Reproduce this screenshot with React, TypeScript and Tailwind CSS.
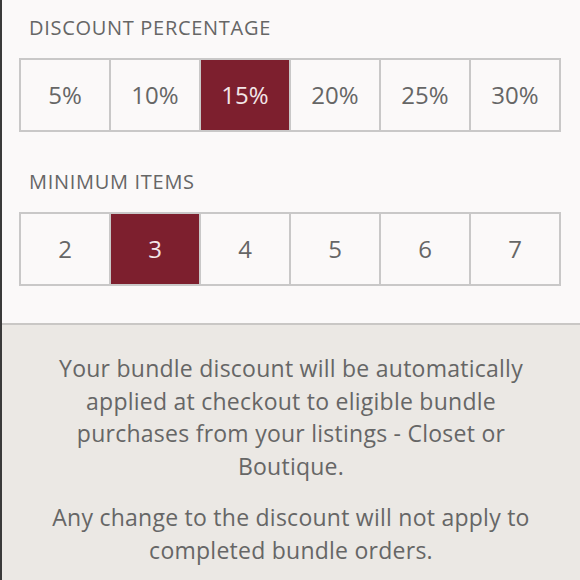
import React from "react";

const pct = ["5%", "10%", "15%", "20%", "25%", "30%"];
const items = ["2", "3", "4", "5", "6", "7"];

function Row({ values, selected }: { values: string[]; selected: number }) {
  return (
    <div className="flex w-[542px] h-[74px] border-2 border-[#c9c8c8]">
      {values.map((v, i) => (
        <div
          key={v}
          className={`flex-1 flex items-center justify-center text-[24px] ${i > 0 ? "border-l-2 border-[#c9c8c8]" : ""} ${i === selected ? "bg-[#7d1f2e] text-[#f3e6e8]" : "text-[#666666]"}`}
        >
          {v}
        </div>
      ))}
    </div>
  );
}

export default function App() {
  return (
    <div
      className="w-[580px] h-[580px] overflow-hidden border-l-2 border-[#3a3a3a] flex flex-col"
      style={{ fontFamily: "'Open Sans', Lato, sans-serif" }}
    >
      <div className="h-[323px] bg-[#fbf9f9] pl-[17px] pt-[16px]">
        <div className="h-[24px] leading-[24px] text-[20px] tracking-[0.7px] text-[#666666] pl-[10px]">DISCOUNT PERCENTAGE</div>
        <div className="mt-[18px]">
          <Row values={pct} selected={2} />
        </div>
        <div className="mt-[38px] h-[24px] leading-[24px] text-[20px] tracking-[0.7px] text-[#666666] pl-[10px]">MINIMUM ITEMS</div>
        <div className="mt-[18px]">
          <Row values={items} selected={1} />
        </div>
      </div>
      <div className="flex-1 border-t-2 border-[#c9c7c5] bg-[#ebe8e4] pt-[27px] text-center text-[23px] tracking-[0.25px] leading-[32.5px] text-[#666666]">
        <p>
          Your bundle discount will be automatically
          <br />
          applied at checkout to eligible bundle
          <br />
          purchases from your listings - Closet or
          <br />
          Boutique.
        </p>
        <p className="mt-[19px]">
          Any change to the discount will not apply to
          <br />
          completed bundle orders.
        </p>
      </div>
    </div>
  );
}
